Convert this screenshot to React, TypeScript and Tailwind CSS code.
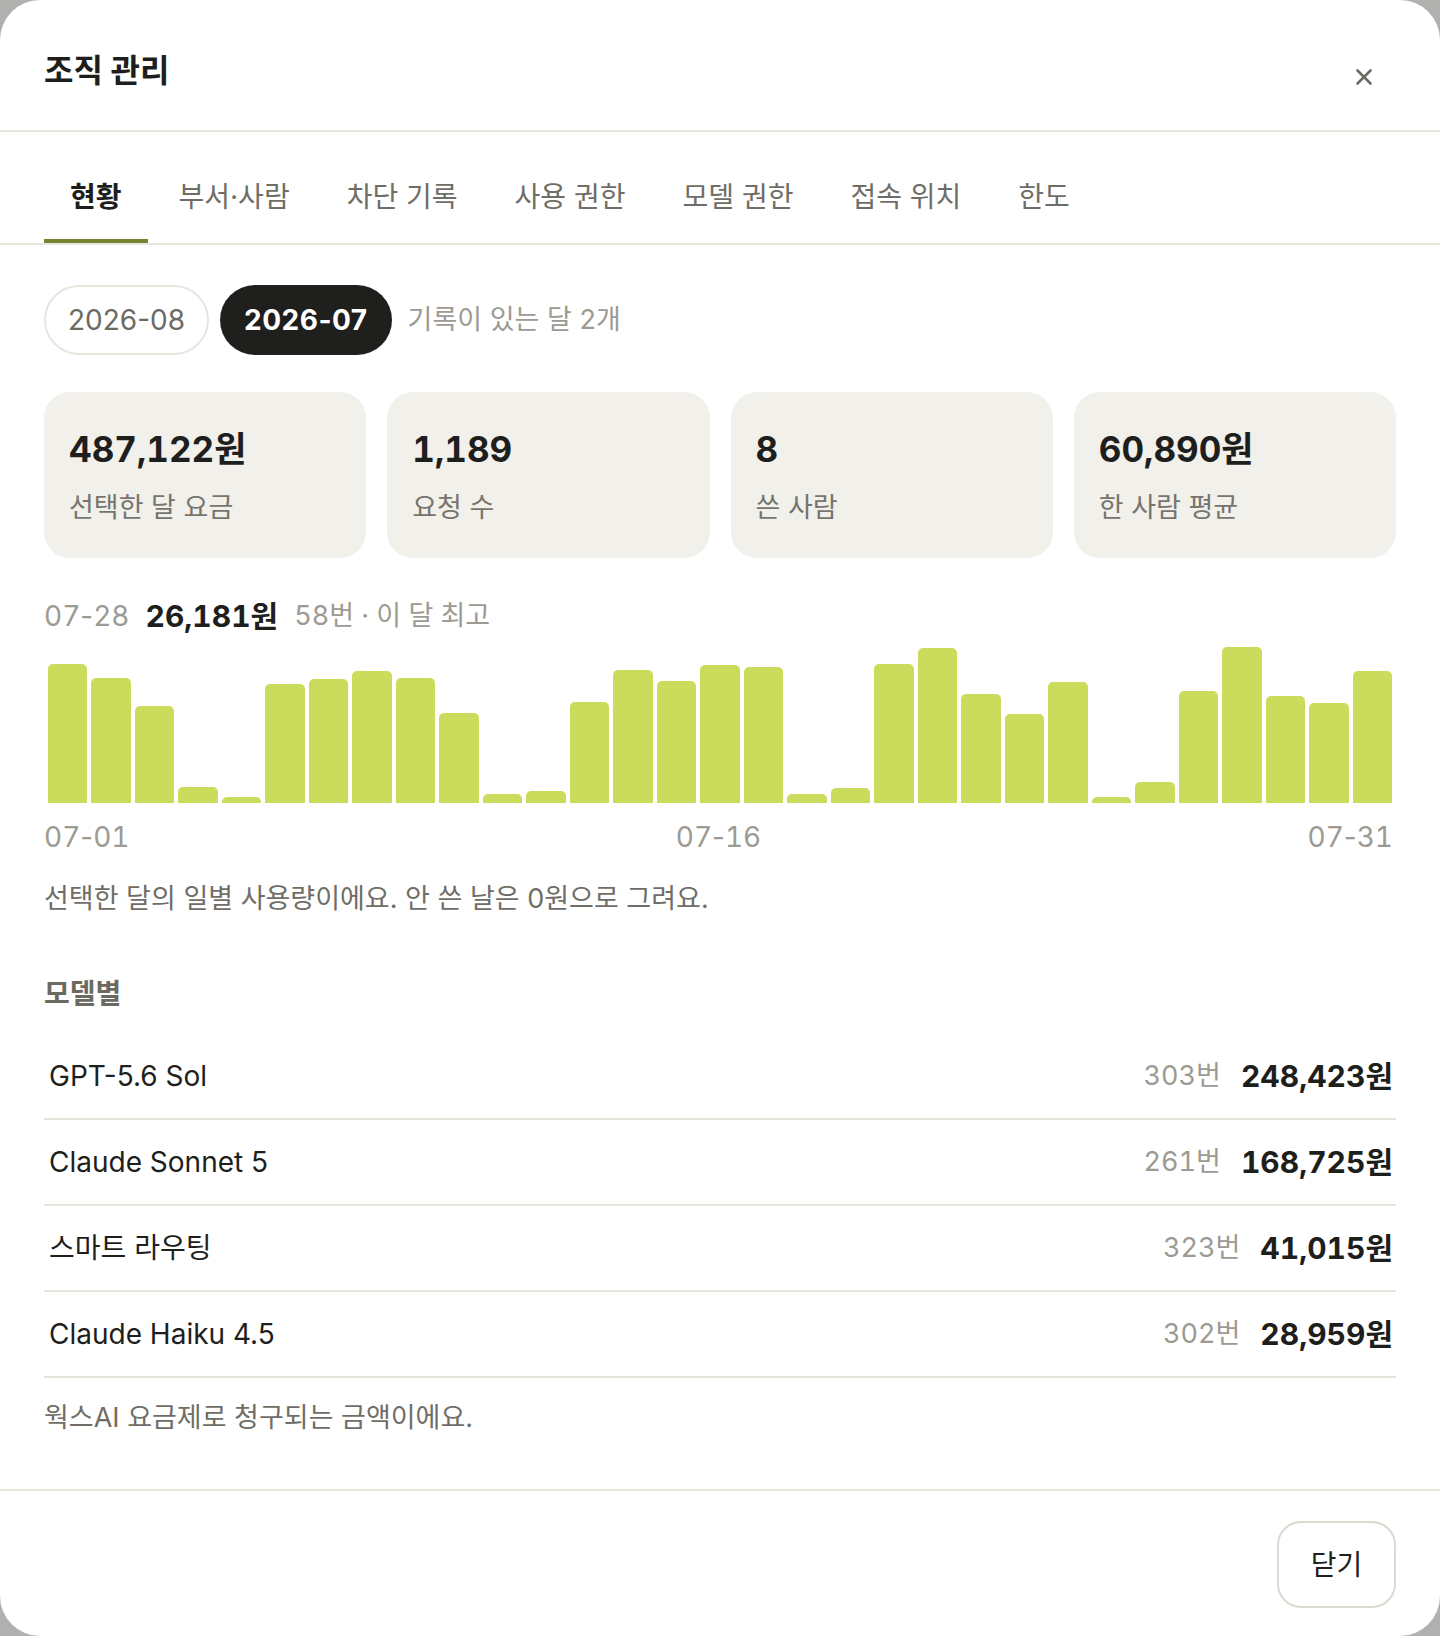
import { X } from 'lucide-react'

const TABS = ["현황", "부서·사람", "차단 기록", "사용 권한", "모델 권한", "접속 위치", "한도"]

const STATS = [
  { value: "487,122원", label: "선택한 달 요금" },
  { value: "1,189", label: "요청 수" },
  { value: "8", label: "쓴 사람" },
  { value: "60,890원", label: "한 사람 평균" },
]

// daily bar heights in px (chart is 160 tall)
const DAYS = [139, 125, 97, 16, 6, 119, 124, 132, 125, 90, 9, 12, 101, 133, 122, 138, 136, 9, 15, 139, 155, 109, 89, 121, 6, 21, 112, 156, 107, 100, 132]

const MODELS = [
  { name: "GPT-5.6 Sol", count: "303번", amount: "248,423원" },
  { name: "Claude Sonnet 5", count: "261번", amount: "168,725원" },
  { name: "스마트 라우팅", count: "323번", amount: "41,015원" },
  { name: "Claude Haiku 4.5", count: "302번", amount: "28,959원" },
]

// tabular digits, but keep the hyphen narrow
function Day({ d }: { d: string }) {
  const [m, day] = d.split("-")
  return (
    <span>
      <span className="tabular-nums">{m}</span>-<span className="tabular-nums">{day}</span>
    </span>
  )
}

export default function App() {
  return (
    <div
      className="min-h-screen w-full bg-[#b0b0ae]"
      style={{ fontFamily: 'Inter, "Noto Sans CJK KR", sans-serif' }}
    >
      <div className="w-full h-[1636px] bg-white rounded-[40px] flex flex-col overflow-hidden text-[#1e1e1c]">
        {/* header */}
        <div className="flex items-start justify-between px-[44px] pt-[50px] h-[132px] border-b-2 border-[#e8e5dc]">
          <h1 className="text-[32px] leading-[42px] font-bold">조직 관리</h1>
          <button className="mt-[14px] mr-[19px] text-[#6b6b64]">
            <X size={26} strokeWidth={2.4} />
          </button>
        </div>

        {/* tabs */}
        <div className="flex gap-[5px] px-[44px] pt-[45px] border-b-2 border-[#e8e5dc]">
          {TABS.map((t, i) => (
            <div
              key={t}
              className={
                i === 0
                  ? "px-[26px] text-[28px] leading-[40px] pb-[22px] border-b-4 border-[#788332] font-bold text-[#1e1e1c]"
                  : "px-[26px] text-[28px] leading-[40px] pb-[22px] border-b-4 border-transparent text-[#6e6d66]"
              }
            >
              {t}
            </div>
          ))}
        </div>

        {/* body */}
        <div className="flex-1 px-[44px] pt-[40px]">
          <div className="flex items-center gap-[11px]">
            <button className="h-[70px] px-[22px] rounded-full border-2 border-[#e8e5dc] text-[28px] text-[#6b6a63]">2026-08</button>
            <button className="h-[70px] px-[24px] rounded-full bg-[#1f1f1d] text-[28px] font-bold text-white tracking-[0.5px]">2026-07</button>
            <span className="ml-[5px] text-[27px] text-[#9c9a92]">기록이 있는 달 2개</span>
          </div>

          <div className="grid grid-cols-4 gap-[21px] mt-[37px]">
            {STATS.map((s) => (
              <div key={s.label} className="h-[166px] rounded-[26px] bg-[#f1f0eb] px-[25px] pt-[35px]">
                <div className="text-[35px] leading-[44px] font-bold tabular-nums">{s.value}</div>
                <div className="mt-[19px] text-[27px] leading-[36px] text-[#76746c]">{s.label}</div>
              </div>
            ))}
          </div>

          {/* chart */}
          <div className="mt-[40px] flex items-center gap-[16px] text-[28px] leading-[36px]">
            <span className="text-[#9c9a92]"><Day d="07-28" /></span>
            <span className="text-[30px] font-bold tabular-nums">26,181원</span>
            <span className="text-[27px] text-[#9c9a92] tabular-nums">58번 · 이 달 최고</span>
          </div>
          <div className="mt-[9px] h-[160px] flex items-end gap-[4px] px-[4px]">
            {DAYS.map((h, i) => (
              <div key={i} className="flex-1 bg-[#cbdb5b] rounded-t-[5px]" style={{ height: h }} />
            ))}
          </div>
          <div className="mt-[16px] flex justify-between pr-[3px] text-[28px] leading-[36px] text-[#9c9a92]">
            <Day d="07-01" />
            <Day d="07-16" />
            <Day d="07-31" />
          </div>
          <p className="mt-[26px] text-[27px] leading-[36px] text-[#6f6d66]">
            선택한 달의 일별 사용량이에요. 안 쓴 날은 0원으로 그려요.
          </p>

          {/* per model */}
          <h2 className="mt-[59px] text-[28px] leading-[36px] font-bold text-[#6b6a60]">모델별</h2>
          <div className="mt-[22px]">
            {MODELS.map((m) => (
              <div key={m.name} className="h-[86px] flex items-center justify-between pl-[5px] pr-[3px] border-b-2 border-[#e8e5dc]">
                <span className="text-[28px]">{m.name}</span>
                <div className="flex items-center gap-[20px] tabular-nums">
                  <span className="text-[27px] text-[#9c9a92]">{m.count}</span>
                  <span className="text-[30px] font-bold">{m.amount}</span>
                </div>
              </div>
            ))}
          </div>
          <p className="mt-[22px] text-[27px] leading-[36px] text-[#6f6d66]">웍스AI 요금제로 청구되는 금액이에요.</p>
        </div>

        {/* footer */}
        <div className="h-[147px] border-t-2 border-[#e8e5dc] flex justify-end items-start px-[44px] pt-[30px]">
          <button className="h-[87px] w-[119px] rounded-[24px] border-2 border-[#ddd9cf] text-[28px]">닫기</button>
        </div>
      </div>
    </div>
  )
}
